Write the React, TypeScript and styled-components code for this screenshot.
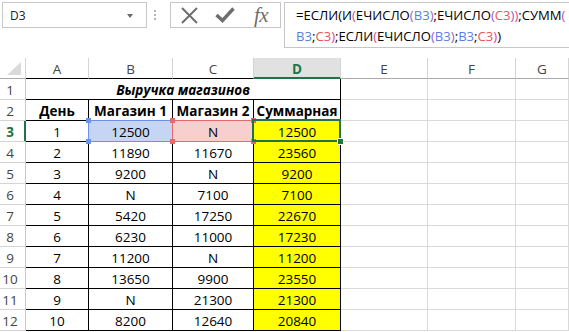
import styled, { createGlobalStyle } from 'styled-components';

const GlobalStyle = createGlobalStyle`
  body {
    margin: 0;
    background: #fff;
    overflow: hidden;
  }
`;

const GREEN = '#217346';
const BLUE = '#5a7fe2';
const RED = '#e4555e';
const P2 = '#d9468f';
const P3 = '#9a5bc4';

type Value = number | string;

const rows: Value[][] = [
  [1, 12500, 'N', 12500],
  [2, 11890, 11670, 23560],
  [3, 9200, 'N', 9200],
  [4, 'N', 7100, 7100],
  [5, 5420, 17250, 22670],
  [6, 6230, 11000, 17230],
  [7, 11200, 'N', 11200],
  [8, 13650, 9900, 23550],
  [9, 'N', 21300, 21300],
  [10, 8200, 12640, 20840],
];

const XIcon = () => (
  <svg width="17" height="17" viewBox="0 0 17 17">
    <path d="M1 1 L16 16 M16 1 L1 16" stroke="#6e6e6e" strokeWidth="2" fill="none" />
  </svg>
);

const CheckIcon = () => (
  <svg width="20" height="16" viewBox="0 0 20 16">
    <path d="M1.5 8 L7.5 13.5 L18.5 1.5" stroke="#6e6e6e" strokeWidth="3.4" fill="none" />
  </svg>
);

const GripDots = () => (
  <svg width="23" height="26" viewBox="0 0 23 26">
    <rect x="7" y="8" width="2" height="2" fill="#b4b4b4" />
    <rect x="7" y="12" width="2" height="2" fill="#b4b4b4" />
    <rect x="7" y="16" width="2" height="2" fill="#b4b4b4" />
  </svg>
);

const SelectAll = () => (
  <svg width="15" height="14" viewBox="0 0 15 14">
    <polygon points="14,0 14,13 0,13" fill="#dadada" />
  </svg>
);

type MarkProps = { color: string };

const RefMark = ({ color }: MarkProps) => (
  <RangeMark $color={color}>
    <Handle $color={color} $x="left" $y="top" />
    <Handle $color={color} $x="right" $y="top" />
    <Handle $color={color} $x="left" $y="bottom" />
    <Handle $color={color} $x="right" $y="bottom" />
  </RangeMark>
);

export default function App() {
  const cols = ['A', 'B', 'C', 'D', 'E', 'F', 'G'];

  return (
    <>
      <GlobalStyle />
      <Toolbar>
        <NameBox>
          D3
          <Caret />
        </NameBox>
        <Grip>
          <GripDots />
        </Grip>
        <FuncBox>
          <FuncSlot>
            <XIcon />
          </FuncSlot>
          <FuncSlot>
            <CheckIcon />
          </FuncSlot>
          <FuncSlot>
            <Fx>fx</Fx>
          </FuncSlot>
        </FuncBox>
        <FormulaBox>
          <FormulaLine>
            =ЕСЛИ(И<Tok $c={P2}>(</Tok>ЕЧИСЛО<Tok $c={P3}>(</Tok>
            <Tok $c={BLUE}>B3</Tok>
            <Tok $c={P3}>)</Tok>;ЕЧИСЛО<Tok $c={P3}>(</Tok>
            <Tok $c={RED}>C3</Tok>
            <Tok $c={P3}>)</Tok>
            <Tok $c={P2}>)</Tok>;СУММ<Tok $c={P2}>(</Tok>
          </FormulaLine>
          <FormulaLine>
            <Tok $c={BLUE}>B3</Tok>;<Tok $c={RED}>C3</Tok>
            <Tok $c={P2}>)</Tok>;ЕСЛИ<Tok $c={P2}>(</Tok>ЕЧИСЛО<Tok $c={P3}>(</Tok>
            <Tok $c={BLUE}>B3</Tok>
            <Tok $c={P3}>)</Tok>;<Tok $c={BLUE}>B3</Tok>;<Tok $c={RED}>C3</Tok>
            <Tok $c={P2}>)</Tok>)
          </FormulaLine>
        </FormulaBox>
      </Toolbar>

      <Sheet>
        <Corner>
          <SelectAll />
        </Corner>
        {cols.map((c, i) => (
          <ColHead key={c} $active={c === 'D'} $edge={i < 3 ? '#000' : '#ababab'}>
            {c}
          </ColHead>
        ))}

        <RowHead>1</RowHead>
        <Cell $span={4} $bold $italic $edge="#000">
          Выручка магазинов
        </Cell>
        <Cell />
        <Cell />
        <Cell />

        <RowHead>2</RowHead>
        <Cell $bold $edge="#000">День</Cell>
        <Cell $bold $edge="#000">Магазин 1</Cell>
        <Cell $bold $edge="#000">Магазин 2</Cell>
        <Cell $bold $edge="#000">Суммарная</Cell>
        <Cell />
        <Cell />
        <Cell />

        {rows.map((r, i) => {
          const first = i === 0;
          return [
            <RowHead key={`h${i}`} $active={first}>
              {i + 3}
            </RowHead>,
            <Cell key={`a${i}`} $edge="#000">
              {r[0]}
            </Cell>,
            <Cell key={`b${i}`} $edge="#000" $fill={first ? '#c7d5f5' : undefined}>
              {r[1]}
              {first && <RefMark color="#6a92ea" />}
            </Cell>,
            <Cell key={`c${i}`} $edge="#000" $fill={first ? '#f8cfcf' : undefined}>
              {r[2]}
              {first && <RefMark color="#e56a6c" />}
            </Cell>,
            <Cell key={`d${i}`} $edge="#000" $fill="#ffff00">
              {r[3]}
              {first && (
                <Selection>
                  <FillHandle />
                </Selection>
              )}
            </Cell>,
            <Cell key={`e${i}`} />,
            <Cell key={`f${i}`} />,
            <Cell key={`g${i}`} />,
          ];
        })}
      </Sheet>
    </>
  );
}

const Toolbar = styled.div`
  display: flex;
  align-items: flex-start;
  height: 58px;
  box-sizing: border-box;
  padding-top: 2px;
  font-family: 'Open Sans', 'Noto Sans', sans-serif;
`;

const NameBox = styled.div`
  display: flex;
  align-items: center;
  box-sizing: border-box;
  width: 145px;
  height: 26px;
  margin-left: 2px;
  padding: 1px 0 0 7px;
  border: 1px solid #c6c6c6;
  font-size: 12px;
  color: #222;
`;

const Caret = styled.span`
  margin-left: auto;
  margin-right: 13px;
  width: 0;
  height: 0;
  border-left: 3.5px solid transparent;
  border-right: 3.5px solid transparent;
  border-top: 4px solid #6a6a6a;
`;

const Grip = styled.div`
  width: 23px;
  height: 26px;
`;

const FuncBox = styled.div`
  display: flex;
  box-sizing: border-box;
  width: 111px;
  height: 26px;
  border: 1px solid #c6c6c6;
`;

const FuncSlot = styled.div`
  display: flex;
  align-items: center;
  justify-content: center;
  width: 36px;
  height: 24px;
`;

const Fx = styled.span`
  font-family: 'Liberation Serif', 'DejaVu Serif', serif;
  font-style: italic;
  font-size: 21px;
  line-height: 24px;
  color: #6e6e6e;
  letter-spacing: -0.5px;
`;

const FormulaBox = styled.div`
  flex: 1;
  min-width: 0;
  box-sizing: border-box;
  height: 46px;
  margin-left: 3px;
  padding: 2px 0 0 11px;
  border: 1px solid #c6c6c6;
  border-right: none;
  overflow: hidden;
`;

const FormulaLine = styled.div`
  font-size: 13.1px;
  line-height: 21px;
  color: #000;
  white-space: nowrap;
`;

const Tok = styled.span<{ $c: string }>`
  color: ${(p) => p.$c};
`;

const Sheet = styled.div`
  display: grid;
  grid-template-columns: 26px 63px 84px 81px 87px 87px 88px 1fr;
  grid-auto-rows: 21px;
  font-family: 'Open Sans', 'Noto Sans', sans-serif;
`;

const Corner = styled.div`
  box-sizing: border-box;
  display: flex;
  align-items: flex-end;
  justify-content: flex-end;
  padding: 0 3px 2px 0;
  border-right: 1px solid #d4d4d4;
  border-bottom: 1px solid #ababab;
`;

const ColHead = styled.div<{ $active?: boolean; $edge: string }>`
  box-sizing: border-box;
  display: flex;
  align-items: center;
  justify-content: center;
  padding-top: 1px;
  border-right: 1px solid #d4d4d4;
  border-bottom: 1px solid ${(p) => (p.$active ? GREEN : p.$edge)};
  box-shadow: ${(p) => (p.$active ? `inset 0 -1px 0 ${GREEN}` : 'none')};
  background: ${(p) => (p.$active ? '#e1e1e1' : '#fff')};
  color: ${(p) => (p.$active ? GREEN : '#444')};
  font-size: 13.5px;
  font-weight: ${(p) => (p.$active ? 700 : 400)};
`;

const RowHead = styled.div<{ $active?: boolean }>`
  box-sizing: border-box;
  display: flex;
  align-items: center;
  justify-content: center;
  padding: 1px 5px 0 0;
  border-right: 1px solid ${(p) => (p.$active ? GREEN : '#c8c8c8')};
  border-bottom: 1px solid #d4d4d4;
  box-shadow: ${(p) => (p.$active ? `inset -1px 0 0 ${GREEN}` : 'none')};
  color: ${(p) => (p.$active ? GREEN : '#444')};
  font-size: 13.5px;
  font-weight: ${(p) => (p.$active ? 700 : 400)};
`;

const Cell = styled.div<{
  $edge?: string;
  $fill?: string;
  $bold?: boolean;
  $italic?: boolean;
  $span?: number;
}>`
  position: relative;
  box-sizing: border-box;
  display: flex;
  align-items: center;
  justify-content: center;
  padding-top: 1px;
  grid-column: ${(p) => (p.$span ? `span ${p.$span}` : 'auto')};
  border-right: 1px solid ${(p) => p.$edge ?? '#d9d9d9'};
  border-bottom: 1px solid ${(p) => p.$edge ?? '#d9d9d9'};
  background: ${(p) => p.$fill ?? '#fff'};
  color: #000;
  font-size: 13.5px;
  font-weight: ${(p) => (p.$bold ? 700 : 400)};
  font-style: ${(p) => (p.$italic ? 'italic' : 'normal')};
  white-space: nowrap;
`;

const RangeMark = styled.span<{ $color: string }>`
  position: absolute;
  z-index: 1;
  top: -1px;
  left: -1px;
  right: -1px;
  bottom: -1px;
  border: 1px solid ${(p) => p.$color};
  pointer-events: none;
`;

const Handle = styled.span<{ $color: string; $x: 'left' | 'right'; $y: 'top' | 'bottom' }>`
  position: absolute;
  ${(p) => p.$x}: -3px;
  ${(p) => p.$y}: -3px;
  width: 5px;
  height: 5px;
  background: ${(p) => p.$color};
`;

const Selection = styled.span`
  position: absolute;
  z-index: 2;
  top: -2px;
  left: -2px;
  right: -1px;
  bottom: -1px;
  border: 2px solid ${GREEN};
  pointer-events: none;
`;

const FillHandle = styled.span`
  position: absolute;
  right: -5px;
  bottom: -5px;
  width: 5px;
  height: 5px;
  background: ${GREEN};
  border: 1px solid #fff;
`;
